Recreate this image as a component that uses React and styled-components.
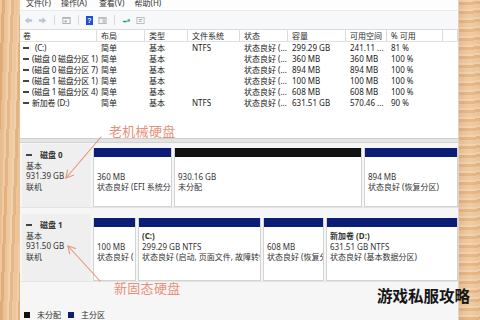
import React from 'react'
import styled, { createGlobalStyle } from 'styled-components'

const GlobalStyle = createGlobalStyle`
  *, *::before, *::after { box-sizing: border-box; }
  html, body {
    margin: 0;
    padding: 0;
    width: 480px;
    height: 320px;
    overflow: hidden;
  }
  body {
    font-family: "Noto Sans", "Noto Sans CJK SC", sans-serif;
    color: #222;
  }
`

const volumes = [
  { name: '(C:)', fs: 'NTFS', size: '299.29 GB', free: '241.11 ...', pct: '81 %', gap: true },
  { name: '(磁盘 0 磁盘分区 1)', fs: '', size: '360 MB', free: '360 MB', pct: '100 %' },
  { name: '(磁盘 0 磁盘分区 7)', fs: '', size: '894 MB', free: '894 MB', pct: '100 %' },
  { name: '(磁盘 1 磁盘分区 1)', fs: '', size: '100 MB', free: '100 MB', pct: '100 %' },
  { name: '(磁盘 1 磁盘分区 4)', fs: '', size: '608 MB', free: '608 MB', pct: '100 %' },
  { name: '新加卷 (D:)', fs: 'NTFS', size: '631.51 GB', free: '570.46 ...', pct: '90 %' },
]

const disks = [
  {
    id: '磁盘 0',
    size: '931.39 GB',
    parts: [
      { w: 79, bar: '#0c1d78', size: '360 MB', status: '状态良好 (EFI 系统分' },
      { w: 188, bar: '#121212', size: '930.16 GB', status: '未分配' },
      { w: 94, bar: '#0c1d78', size: '894 MB', status: '状态良好 (恢复分区)' },
    ],
  },
  {
    id: '磁盘 1',
    size: '931.50 GB',
    parts: [
      { w: 43, bar: '#0c1d78', size: '100 MB', status: '状态良好 (' },
      { w: 123, bar: '#0c1d78', label: '(C:)', size: '299.29 GB NTFS', status: '状态良好 (启动, 页面文件, 故障转储' },
      { w: 61, bar: '#0c1d78', size: '608 MB', status: '状态良好 (恢复分' },
      { w: 132, bar: '#0c1d78', label: '新加卷  (D:)', size: '631.51 GB NTFS', status: '状态良好 (基本数据分区)' },
    ],
  },
]

const DiskManager = () => {
  return (
    <Page>
      <GlobalStyle />
      <Wood side="left" />
      <Window>
        <MenuBar>
          <span>文件(F)</span>
          <span>操作(A)</span>
          <span>查看(V)</span>
          <span>帮助(H)</span>
        </MenuBar>
        <Toolbar>
          <ToolIcon viewBox="0 0 10 10">
            <path d="M1 5 L5 1.5 V3.5 H9 V6.5 H5 V8.5 Z" fill="#b9c6d6" />
          </ToolIcon>
          <ToolIcon viewBox="0 0 10 10">
            <path d="M9 5 L5 1.5 V3.5 H1 V6.5 H5 V8.5 Z" fill="#b9c6d6" />
          </ToolIcon>
          <ToolSep />
          <ToolIcon viewBox="0 0 10 10">
            <rect x="1" y="1.5" width="8" height="7" fill="#f4f4f4" stroke="#9a9a9a" strokeWidth="0.8" />
            <rect x="1" y="1.5" width="8" height="1.6" fill="#b5b5b5" />
            <rect x="3" y="5" width="2" height="2" fill="#9a9a9a" />
          </ToolIcon>
          <ToolSep />
          <HelpIcon>?</HelpIcon>
          <ToolIcon viewBox="0 0 10 10">
            <rect x="1" y="1.5" width="8" height="7" fill="#f4f4f4" stroke="#a0a0a0" strokeWidth="0.8" />
            <rect x="1" y="1.5" width="8" height="1.6" fill="#bdbdbd" />
            <rect x="5" y="3.5" width="3.5" height="4.6" fill="#c8c8c8" />
          </ToolIcon>
          <ToolSep />
          <ToolIcon viewBox="0 0 10 10">
            <path d="M1 6 H6" stroke="#3a9a8a" strokeWidth="1.3" />
            <path d="M2.5 6 V7.5 M4 6 V7.2" stroke="#3a9a8a" strokeWidth="0.9" />
            <circle cx="7.5" cy="5" r="1.6" fill="#5fb6a8" />
          </ToolIcon>
          <ToolIcon viewBox="0 0 10 10">
            <rect x="1" y="1.5" width="8" height="7" fill="#fafafa" stroke="#a8a8a8" strokeWidth="0.8" />
            <path d="M3 4 H7 M3 6 H6" stroke="#8a8a8a" strokeWidth="0.8" />
          </ToolIcon>
        </Toolbar>

        <VolumePane>
          <TableRow header>
            <Cell header>卷</Cell>
            <Cell header>布局</Cell>
            <Cell header>类型</Cell>
            <Cell header>文件系统</Cell>
            <Cell header>状态</Cell>
            <Cell header>容量</Cell>
            <Cell header>可用空间</Cell>
            <Cell header>% 可用</Cell>
            <Cell header />
          </TableRow>
          {volumes.map((v) => (
            <TableRow key={v.name}>
              <Cell>
                <VolDash />
                <VolName gap={v.gap}>{v.name}</VolName>
              </Cell>
              <Cell>简单</Cell>
              <Cell>基本</Cell>
              <Cell>{v.fs}</Cell>
              <Cell>状态良好 (...</Cell>
              <Cell>{v.size}</Cell>
              <Cell>{v.free}</Cell>
              <Cell>{v.pct}</Cell>
              <Cell />
            </TableRow>
          ))}
        </VolumePane>

        <Splitter />

        <DiskPane>
          {disks.map((d, i) => (
            <DiskRow key={d.id} first={i === 0}>
              <DiskInfo>
                <DiskTitle>
                  <VolDash />
                  <b>{d.id}</b>
                </DiskTitle>
                <div>基本</div>
                <div>{d.size}</div>
                <div>联机</div>
              </DiskInfo>
              <Parts>
                {d.parts.map((p, j) => (
                  <Part key={j} style={{ width: p.w }}>
                    <PartBar color={p.bar} />
                    <PartBody>
                      <PartLabel>{p.label || '\u00a0'}</PartLabel>
                      <div>{p.size}</div>
                      <div>{p.status}</div>
                    </PartBody>
                  </Part>
                ))}
              </Parts>
            </DiskRow>
          ))}
          <Legend>
            <Swatch color="#111" />
            <span>未分配</span>
            <Swatch color="#0c1d78" />
            <span>主分区</span>
          </Legend>
        </DiskPane>
      </Window>
      <Wood side="right" />

      <Callouts viewBox="0 0 480 320">
        <g stroke="#e8917a" strokeWidth="1.1" fill="none" strokeLinecap="round">
          <path d="M101 137 L66 178" />
          <path d="M73.5 175.3 L66 178 L67.5 170.1" />
          <path d="M100 281 L68 246" />
          <path d="M69.7 253.8 L68 246 L75.6 248.4" />
        </g>
      </Callouts>
      <Note top={123} left={109}>老机械硬盘</Note>
      <Note top={280} left={114}>新固态硬盘</Note>
      <Watermark>游戏私服攻略</Watermark>
    </Page>
  )
}

const Page = styled.div`
  position: relative;
  display: flex;
  width: 480px;
  height: 320px;
  overflow: hidden;
`

const Wood = styled.div`
  flex: 0 0 ${(p) => (p.side === 'left' ? '20px' : '21px')};
  background:
    repeating-linear-gradient(
      ${(p) => (p.side === 'left' ? '92deg' : '178deg')},
      rgba(255, 240, 220, 0.35) 0 2px,
      rgba(200, 140, 80, 0.18) 2px 5px,
      rgba(255, 230, 200, 0.2) 5px 9px
    ),
    linear-gradient(90deg, #e2b07c, #ecc59a 50%, #e6b98a);
`

const Window = styled.div`
  flex: 1;
  display: flex;
  flex-direction: column;
  background: #fff;
  border-right: 1px solid #d6d6d6;
  font-size: 8px;
`

const MenuBar = styled.div`
  height: 10px;
  flex: none;
  display: flex;
  gap: 10px;
  padding-left: 6px;
  line-height: 5px;
  color: #333;
  background: #fdfdfd;
  span:nth-child(3) { margin-left: 2px; }
`

const Toolbar = styled.div`
  height: 20px;
  flex: none;
  display: flex;
  align-items: center;
  gap: 5px;
  padding-left: 4px;
  background: #f7f8fa;
  border-top: 1px solid #ececec;
  border-bottom: 1px solid #dcdcdc;
`

const ToolIcon = styled.svg`
  width: 9px;
  height: 9px;
`

const ToolSep = styled.div`
  width: 1px;
  height: 10px;
  background: #d8d8d8;
  margin: 0 2px;
`

const HelpIcon = styled.div`
  width: 7px;
  height: 9px;
  background: #1d4fd6;
  color: #fff;
  font: bold 7px/9px "Liberation Sans", sans-serif;
  text-align: center;
`

const VolumePane = styled.div`
  height: 108px;
  flex: none;
  background: #fff;
`

const TableRow = styled.div`
  display: grid;
  grid-template-columns: 77px 48px 43px 52px 48px 58px 41px 56px 1fr;
  height: ${(p) => (p.header ? '12px' : '11px')};
  line-height: 11px;
  ${(p) => p.header && 'border-bottom: 1px solid #e2e2e2;'}
`

const Cell = styled.div`
  display: flex;
  align-items: center;
  padding-left: 4px;
  white-space: nowrap;
  overflow: hidden;
  color: ${(p) => (p.header ? '#2a2a2a' : '#222')};
  ${(p) => p.header && 'border-right: 1px solid #dcdcdc;'}
  &:first-child {
    padding-left: 3px;
    overflow: visible;
  }
`

const VolDash = styled.span`
  display: inline-block;
  width: 6px;
  height: 2px;
  background: #444;
  margin-right: 3px;
  flex: none;
`

const VolName = styled.span`
  margin-left: ${(p) => (p.gap ? '3px' : '0')};
  letter-spacing: -0.2px;
`

const Splitter = styled.div`
  height: 5px;
  flex: none;
  background: #e4e4e4;
  border-top: 1px solid #cfcfcf;
  border-bottom: 1px solid #d2d2d2;
`

const DiskPane = styled.div`
  flex: 1;
  display: flex;
  flex-direction: column;
  gap: 6px;
  background: #f6f6f6;
  padding-top: 1px;
`

const DiskRow = styled.div`
  display: flex;
  gap: 2px;
  flex: none;
  height: ${(p) => (p.first ? '64px' : '68px')};
  border-bottom: 1px solid #e4e4e4;
`

const DiskInfo = styled.div`
  width: 69px;
  margin-left: 2px;
  padding: 6px 0 0 4px;
  background: #efefef;
  line-height: 10.5px;
  color: #333;
`

const DiskTitle = styled.div`
  display: flex;
  align-items: center;
  b { font-weight: 700; margin-left: 5px; }
`

const Parts = styled.div`
  flex: 1;
  display: flex;
  gap: 2px;
  padding-top: 4px;
`

const Part = styled.div`
  display: flex;
  flex-direction: column;
  background: #fff;
  border: 1px solid #d3d3d3;
  border-top: none;
  overflow: hidden;
`

const PartBar = styled.div`
  height: 9px;
  background: ${(p) => p.color};
  flex: none;
`

const PartBody = styled.div`
  padding: 4px 0 0 3px;
  line-height: 10.5px;
  color: #333;
  white-space: nowrap;
  overflow: hidden;
`

const PartLabel = styled.div`
  font-weight: 700;
`

const Legend = styled.div`
  margin-top: 22px;
  display: flex;
  align-items: center;
  gap: 3px;
  padding-left: 4px;
  line-height: 10px;
  color: #333;
  span { margin-right: 4px; }
`

const Swatch = styled.span`
  width: 6px;
  height: 6px;
  background: ${(p) => p.color};
`

const Callouts = styled.svg`
  position: absolute;
  left: 0;
  top: 0;
  width: 480px;
  height: 320px;
  pointer-events: none;
`

const Note = styled.div`
  position: absolute;
  top: ${(p) => p.top}px;
  left: ${(p) => p.left}px;
  font: 13px/16px "Noto Sans CJK SC", sans-serif;
  color: #e8917a;
  letter-spacing: 0.3px;
`

const Watermark = styled.div`
  position: absolute;
  right: 10px;
  top: 286px;
  font: 700 15.5px/18px "Noto Sans CJK SC", sans-serif;
  color: #151515;
`

export default DiskManager
